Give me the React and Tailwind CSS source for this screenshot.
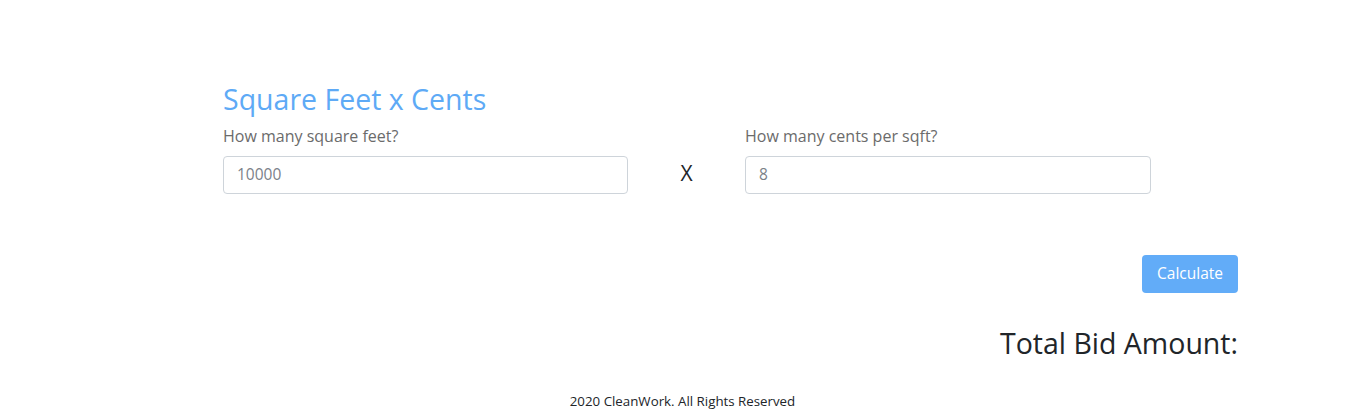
import React from "react";

export default function App() {
    const [sqft, setSqft] = React.useState("");
    const [cents, setCents] = React.useState("");

    return (
        <div
            className="min-h-[412px] bg-white text-[#212529]"
            style={{ fontFamily: '"Open Sans", "Liberation Sans", sans-serif' }}
        >
            <div className="pt-[81px] pl-[223px] pr-[127px]">
                <h3 className="text-[28.5px] leading-[36px] text-[#5eaaf6]">Square Feet x Cents</h3>

                <div className="mt-[8px] flex items-start">
                    <div className="w-[405px]">
                        <label className="block text-[16px] leading-[22px] text-[#6b6b6b]">
                            How many square feet?
                        </label>
                        <input
                            className="mt-[9px] h-[38px] w-full rounded-[4px] border border-[#ced4da] px-[13px] pb-[2px] text-[15.5px] text-[#495057] placeholder-[#7b8189] outline-none"
                            placeholder="10000"
                            value={sqft}
                            onChange={(e) => setSqft(e.target.value)}
                        />
                    </div>
                    <div className="flex w-[117px] justify-center pt-[29px] text-[21px] leading-[38px]">X</div>
                    <div className="w-[406px]">
                        <label className="block text-[16px] leading-[22px] text-[#6b6b6b]">
                            How many cents per sqft?
                        </label>
                        <input
                            className="mt-[9px] h-[38px] w-full rounded-[4px] border border-[#ced4da] px-[13px] pb-[2px] text-[15.5px] text-[#495057] placeholder-[#7b8189] outline-none"
                            placeholder="8"
                            value={cents}
                            onChange={(e) => setCents(e.target.value)}
                        />
                    </div>
                </div>

                <div className="mt-[61px] flex justify-end">
                    <button className="h-[38px] w-[96px] rounded-[4px] bg-[#62acf8] pb-[1px] text-[15.5px] text-white">
                        Calculate
                    </button>
                </div>

                <h3 className="mt-[32px] text-right text-[28.5px] leading-[36px]">Total Bid Amount:</h3>
            </div>

            <footer className="mt-[31px] text-center text-[13.3px] leading-[18px]">
                2020 CleanWork. All Rights Reserved
            </footer>
        </div>
    );
}
